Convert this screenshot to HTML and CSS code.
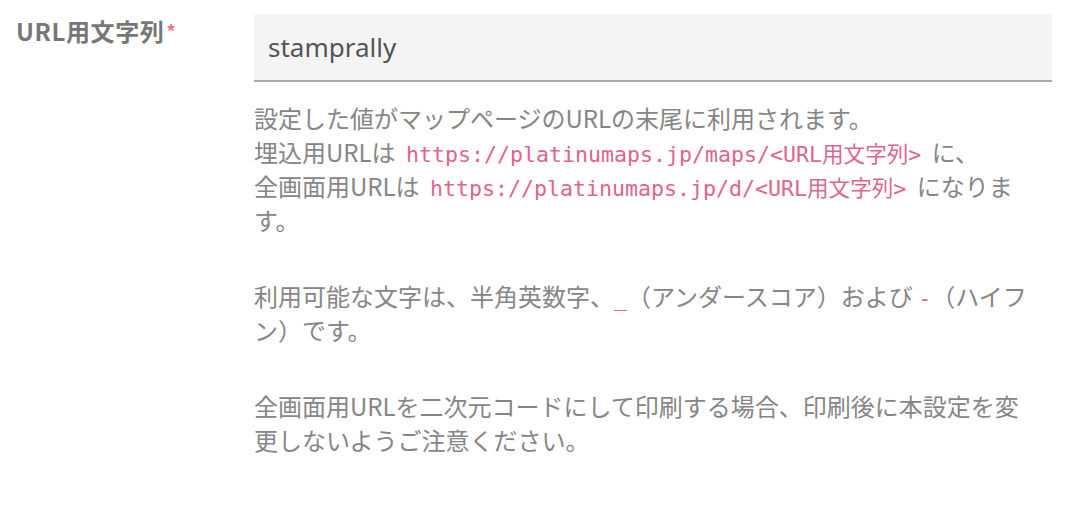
FILE: index.html
```html
<!DOCTYPE html>
<html lang="ja">
<head>
<meta charset="utf-8">
<title>URL用文字列</title>
<link rel="stylesheet" href="styles.css">
</head>
<body>
<div class="form-row">
  <label class="form-label" for="slug">URL用文字列<span class="required">*</span></label>
  <div class="form-field">
    <div class="input-wrap">
      <input id="slug" class="text-input" type="text" value="stamprally">
    </div>
    <div class="help">
      <p>設定した値がマップページのURLの末尾に利用されます。<br>埋込用URLは <code class="url">https://platinumaps.jp/maps/&lt;URL用文字列&gt;</code> に、<br>全画面用URLは <code class="url">https://platinumaps.jp/d/&lt;URL用文字列&gt;</code> になります。</p>
      <p>利用可能な文字は、半角英数字、<code>_</code>（アンダースコア）および <code>-</code>（ハイフン）です。</p>
      <p>全画面用URLを二次元コードにして印刷する場合、印刷後に本設定を変更しないようご注意ください。</p>
    </div>
  </div>
</div>
</body>
</html>
```

FILE: styles.css
```css
html, body {
  margin: 0;
  padding: 0;
  background: #ffffff;
}

body {
  font-family: "Noto Sans CJK JP", "Noto Sans", sans-serif;
  color: #808080;
}

.form-row {
  display: flex;
  align-items: flex-start;
  padding: 14px 0 0 16px;
}

.form-label {
  flex: 0 0 238px;
  font-size: 24px;
  font-weight: 700;
  letter-spacing: 0.6px;
  color: #777777;
  line-height: 34px;
}

.required {
  color: #ec7684;
  font-size: 18px;
  vertical-align: top;
  margin-left: 2px;
}

.form-field {
  width: 798px;
}

.input-wrap {
  background: #f4f4f4;
  border-bottom: 2px solid #aaaaaa;
  height: 66px;
  display: flex;
  align-items: center;
  padding: 0 14px;
}

.text-input {
  border: none;
  background: transparent;
  outline: none;
  font-family: "Noto Sans", "Noto Sans CJK JP", sans-serif;
  font-size: 26px;
  color: #555555;
  padding: 0;
  width: 100%;
}

.help {
  padding-top: 19px;
  padding-right: 23px;
}

.help p {
  margin: 0 0 42px 0;
  font-size: 24px;
  line-height: 34px;
  color: #868686;
}

.help code {
  font-family: "DejaVu Sans Mono", "Noto Sans CJK JP", monospace;
  font-size: 21.6px;
  line-height: 1;
  padding: 0;
  color: #e0648e;
}

.help code.url {
  padding: 0 5px;
}
```
